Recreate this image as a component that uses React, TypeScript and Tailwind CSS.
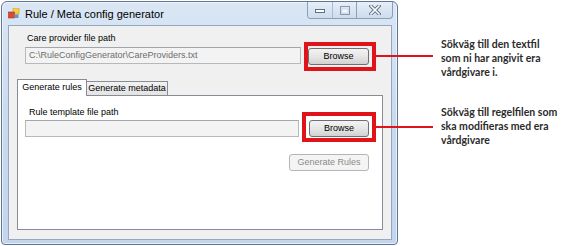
const winFont = { fontFamily: '"Liberation Sans", Arial, sans-serif' };

function AppIcon() {
  return (
    <svg width="12" height="11" viewBox="0 0 12 11">
      <rect x="5" y="0" width="6" height="6" fill="#f2cf43" stroke="#c9a12a" strokeWidth="0.6" />
      <rect x="0.5" y="4" width="6" height="6" fill="#d94a32" stroke="#a8321f" strokeWidth="0.6" />
      <rect x="6.5" y="6.5" width="4" height="3.5" fill="#6f8fc9" />
    </svg>
  );
}

function CaptionButtons() {
  return (
    <div className="flex self-start h-[17px]">
      <div className="flex border border-t-0 border-[#8c9fb6] rounded-bl-[4px] overflow-hidden">
        <div className="w-[25px] h-full flex items-center justify-center bg-gradient-to-b from-[#e6eef8] to-[#cddcee] border-r border-[#a9bbd1]">
          <svg width="10" height="5" viewBox="0 0 10 5">
            <rect x="0.5" y="1.5" width="9" height="3" fill="#fff" stroke="#5f6f84" strokeWidth="1" />
          </svg>
        </div>
        <div className="w-[23px] h-full flex items-center justify-center bg-gradient-to-b from-[#e6eef8] to-[#cddcee]">
          <svg width="10" height="9" viewBox="0 0 10 9">
            <rect x="0.5" y="0.5" width="9" height="8" fill="none" stroke="#8a98aa" strokeWidth="1" />
            <rect x="2" y="3" width="6" height="4" fill="#f5f8fc" stroke="#c2ccd8" strokeWidth="0.6" />
          </svg>
        </div>
      </div>
      <div className="w-[36px] h-full flex items-center justify-center bg-gradient-to-b from-[#e6eef8] to-[#cddcee] border border-t-0 border-l-0 border-[#8c9fb6] rounded-br-[4px]">
        <svg width="12" height="10" viewBox="0 0 12 10">
          <path d="M2 1 L10 9 M10 1 L2 9" stroke="#5f6f84" strokeWidth="3.4" strokeLinecap="square" />
          <path d="M2 1 L10 9 M10 1 L2 9" stroke="#ffffff" strokeWidth="1.6" strokeLinecap="square" />
        </svg>
      </div>
    </div>
  );
}

function WinButton({ label, disabled, className }: { label: string; disabled?: boolean; className: string }) {
  return (
    <div
      className={`h-[17px] flex items-center justify-center rounded-[3px] border text-[9px] ${
        disabled
          ? 'border-[#b3b6b9] bg-[#f4f4f4] text-[#8b8b8b]'
          : 'border-[#707070] bg-gradient-to-b from-[#f3f3f3] via-[#e6e6e6] to-[#d2d2d2] text-black'
      } ${className}`}
    >
      {label}
    </div>
  );
}

function TextBox({ value, className }: { value?: string; className: string }) {
  return (
    <div
      className={`h-[17px] flex items-center px-[3px] border border-[#b5b8bd] border-t-[#a3a6ab] bg-[#f3f3f3] text-[9px] text-[#6d6d6d] ${className}`}
    >
      {value}
    </div>
  );
}

export default function App() {
  return (
    <div className="relative w-[567px] h-[246px] bg-white flex pl-[1px] pt-[1px]" style={winFont}>
      {/* window */}
      <div className="w-[397px] h-[244px] flex flex-col border border-[#5f7592] rounded-t-[6px] rounded-b-[4px] bg-gradient-to-b from-[#dae6f4] via-[#c9daee] to-[#c2d5ec] shadow-[inset_0_0_0_1px_rgba(255,255,255,0.6)]">
        <div className="h-[23px] flex items-start pl-[6px] pr-[4px]">
          <div className="mt-[6px]">
            <AppIcon />
          </div>
          <div className="ml-[5px] mt-[5px] text-[11px] leading-[14px] text-black">Rule / Meta config generator</div>
          <div className="ml-auto">
            <CaptionButtons />
          </div>
        </div>
        <div className="ml-[6px] w-[384px] h-[215px] border border-[#94a8c2] bg-[#f0f0f0] flex flex-col">
          <div className="pl-[18px] pt-[7px] text-[9px] leading-[11px] text-black">Care provider file path</div>
          <div className="flex items-start mt-[3px] pl-[16px]">
            <TextBox value="C:\RuleConfigGenerator\CareProviders.txt" className="w-[276px]" />
            <WinButton label="Browse" className="w-[61px] ml-[7px] mt-[1px]" />
          </div>
          {/* tab control */}
          <div className="ml-[8px] mt-[13px] w-[366px] flex flex-col">
            <div className="flex items-end h-[17px] text-[9px] text-black">
              <div className="w-[70px] h-[17px] bg-white border border-b-0 border-[#898c95] flex items-center justify-center relative z-10 -mb-[1px] pb-[1px]">
                Generate rules
              </div>
              <div className="w-[81px] h-[14px] bg-gradient-to-b from-[#f2f2f2] to-[#e3e3e3] border border-l-0 border-b-0 border-[#898c95] flex items-center justify-center">
                Generate metadata
              </div>
            </div>
            <div className="h-[135px] bg-white border border-[#898c95] flex flex-col">
              <div className="pl-[11px] pt-[11px] text-[9px] leading-[11px] text-black">Rule template file path</div>
              <div className="flex items-start mt-[2px] pl-[7px]">
                <TextBox className="w-[274px]" />
                <WinButton label="Browse" className="w-[60px] ml-[10px]" />
              </div>
              <div className="flex justify-end pr-[13px] mt-[17px]">
                <WinButton label="Generate Rules" disabled className="w-[80px]" />
              </div>
            </div>
          </div>
        </div>
      </div>

      {/* annotations */}
      <div
        className="ml-[43px] pt-[36px] flex flex-col text-[10.5px] leading-[14px] font-bold text-[#2b2b2b]"
        style={{ fontFamily: 'Lato, "Liberation Sans", sans-serif' }}
      >
        <div>
          Sökväg till den textfil
          <br />
          som ni har angivit era
          <br />
          vårdgivare i.
        </div>
        <div className="mt-[26px]">
          Sökväg till regelfilen som
          <br />
          ska modifieras med era
          <br />
          vårdgivare
        </div>
      </div>

      {/* red callouts */}
      <div className="absolute left-[304px] top-[42px] w-[72px] h-[29px] border-[4px] border-[#e0131b]" />
      <div className="absolute left-[376px] top-[55px] w-[57px] h-[2px] bg-[#e0131b]" />
      <div className="absolute left-[302px] top-[112px] w-[74px] h-[30px] border-[4px] border-[#e0131b]" />
      <div className="absolute left-[376px] top-[126px] w-[57px] h-[2px] bg-[#e0131b]" />
    </div>
  );
}
